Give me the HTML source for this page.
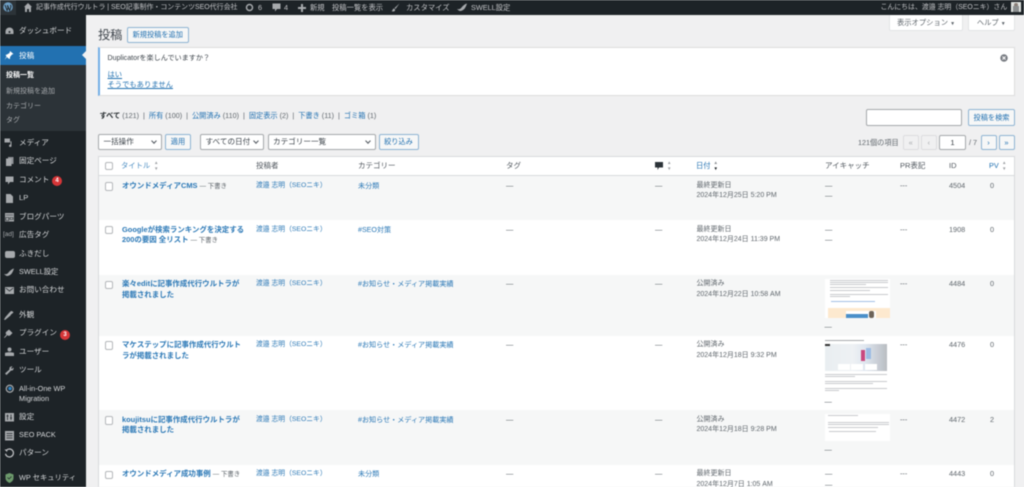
<!DOCTYPE html>
<html lang="ja"><head><meta charset="utf-8"><title>投稿</title>
<style>
html,body{margin:0;padding:0;width:1024px;height:487px;overflow:hidden;background:#f0f0f1}
body{position:relative;font-family:"Liberation Sans","Noto Sans CJK JP",sans-serif;font-size:7.3px;color:#5f666c;line-height:12px}
#w{position:absolute;left:0;top:0;width:1024px;height:487px;overflow:hidden;filter:blur(.4px)}
.a,.a *{box-sizing:border-box}
.a{position:absolute;white-space:nowrap}
#bar{left:0;top:0;width:1024px;height:15px;background:#1d2327}
#side{left:0;top:15px;width:85.5px;height:472px;background:#1d2327}
.b{color:#c3c4c7;font-size:7.3px;top:1.5px}
.m{color:#d5d7d9;font-size:7.6px;left:19px}
.s{color:#a7aaad;font-size:7px;left:6px}
svg{position:absolute;overflow:visible}
.btn{border:1px solid #8fb4d3;border-radius:2px;background:#f6f7f7;color:#2271b1;text-align:center;height:15px;line-height:13px;font-size:7.2px}
.sel{border:1px solid #a5a8ab;border-radius:2px;background:#fff;color:#3c434a;height:16px;line-height:14px;font-size:7.6px;padding-left:4.5px}
.sel:after{content:"";position:absolute;right:5px;top:4px;width:3px;height:3px;border:solid #50575e;border-width:0 1px 1px 0;transform:rotate(45deg)}
.l{color:#2271b1}
.ti{color:#2b78b6;font-weight:700;font-size:7.45px;left:122px}
.dr{color:#5f666c;font-weight:400;font-size:6.4px}
.c{left:104.5px;width:8.5px;height:8.5px;border:1px solid #b4b7ba;border-radius:2px;background:#fff}
.au{left:256px;color:#2b78b6;font-size:6.8px}
.ca{left:358px;color:#2b78b6;font-size:7.1px}
.da{left:696.5px;font-size:7px}
.h{font-size:7.5px;color:#50575e}
.pg{width:15.5px;height:15.5px;top:134.5px;border:1px solid #dcdcde;border-radius:2px;background:#f0f0f1;color:#a7aaad;text-align:center;line-height:13px;font-size:7.5px}
.pa{border-color:#8fb4d3;background:#f6f7f7;color:#2271b1}
.ln{background:#c8cacd;height:.8px}
</style></head><body><div id="w">

<div class="a" id="bar"></div>
<div class="a" style="left:0;top:0;width:15.5px;height:15px;background:#2c3338"></div>
<svg style="left:3px;top:2px" width="10" height="10" viewBox="0 0 20 20"><circle cx="10" cy="10" r="9.5" fill="#6f9fc4"/><path d="M4 6l4.2 11 2-6-1.6-4.4M9 6.4l4.2 10.8 2.4-7c.7-2.2-.6-3.800-1-4.300" fill="none" stroke="#1d2327" stroke-width="1.900"/></svg>
<svg style="left:24px;top:3px" width="8" height="9" viewBox="0 0 16 18"><path d="M8 0L0 8h2v10h4v-6h4v6h4V8h2z" fill="#a7aaad"/></svg>
<span class="a b" style="left:36px;font-size:6.95px">記事作成代行ウルトラ | SEO記事制作・コンテンツSEO代行会社</span>
<svg style="left:245px;top:3px" width="9" height="9" viewBox="0 0 18 18"><circle cx="9" cy="9" r="6" fill="none" stroke="#a7aaad" stroke-width="3"/></svg>
<span class="a b" style="left:258px">6</span>
<svg style="left:272px;top:3px" width="9" height="9" viewBox="0 0 18 18"><path d="M1 1h16v11H10l-4 5v-5H1z" fill="#a7aaad"/></svg>
<span class="a b" style="left:284px">4</span>
<svg style="left:298px;top:3.500px" width="8" height="8" viewBox="0 0 16 16"><path d="M6 0h4v6h6v4h-6v6H6v-6H0V6h6z" fill="#a7aaad"/></svg>
<span class="a b" style="left:310px">新規</span>
<span class="a b" style="left:332px">投稿一覧を表示</span>
<svg style="left:391px;top:3px" width="9" height="9" viewBox="0 0 18 18"><path d="M17 1L7 10l2 2zM6 11c-3 0-2 4-5 5 3 2 8 1 7-3z" fill="#a7aaad"/></svg>
<span class="a b" style="left:406px">カスタマイズ</span>
<svg style="left:457px;top:3px" width="11" height="9" viewBox="0 0 22 18"><path d="M20 1c-2 6-5 14-13 15C4 16 2 14 0 12c4 1 7 0 9-3 3-4 7-7 11-8z" fill="#a7aaad"/></svg>
<span class="a b" style="left:471px">SWELL設定</span>
<span class="a b" style="left:880.500px;font-size:6.900px">こんにちは、渡邉 志明（SEOニキ）さん</span>
<div class="a" style="left:1011px;top:2px;width:10px;height:10px;background:#dfe3e0"></div>
<div class="a" style="left:1014px;top:3px;width:4px;height:3.500px;background:#8a7f78;border-radius:2px"></div>
<div class="a" style="left:1013px;top:6px;width:6px;height:6px;background:#8b8f90"></div>

<div class="a" id="side"></div>
<div class="a" style="left:0;top:46px;width:85.500px;height:18.500px;background:#2271b1"></div>
<div class="a" style="left:81.500px;top:51px;width:0;height:0;border:4px solid transparent;border-right:4.500px solid #f0f0f1;border-left:0"></div>
<div class="a" style="left:0;top:64.500px;width:85.500px;height:66px;background:#2c3338"></div>

<svg style="left:5px;top:27px" width="9" height="8" viewBox="0 0 18 16"><path d="M9 1a8 8 0 0 0-8 8v5h16V9a8 8 0 0 0-8-8z" fill="#a7aaad"/><circle cx="9" cy="10" r="2" fill="#1d2327"/></svg>
<span class="a m" style="top:25px">ダッシュボード</span>
<svg style="left:4px;top:51px" width="10" height="9" viewBox="0 0 20 18"><path d="M12 0l7 6-3 1-4 5 0 4-3-1-3-3-5 6 4-7-2-3 3-1 5-3z" fill="#fff"/></svg>
<span class="a m" style="top:49.500px;color:#fff">投稿</span>
<span class="a s" style="top:70px;color:#fff;font-weight:700">投稿一覧</span>
<span class="a s" style="top:85.500px">新規投稿を追加</span>
<span class="a s" style="top:100.500px">カテゴリー</span>
<span class="a s" style="top:115px">タグ</span>

<svg style="left:4px;top:138px" width="10" height="10" viewBox="0 0 20 20"><path d="M1 1h11v8H1z" fill="#a7aaad"/><path d="M15 7v8a2.500 2.500 0 1 1-2-2V6z" fill="#a7aaad"/></svg>
<span class="a m" style="top:137px">メディア</span>
<svg style="left:5px;top:157px" width="9" height="9" viewBox="0 0 18 18"><path d="M6 0h11v14H6z" fill="#8e9196"/><path d="M2 3h11v15H2z" fill="#a7aaad"/></svg>
<span class="a m" style="top:155px">固定ページ</span>
<svg style="left:5px;top:176px" width="9" height="9" viewBox="0 0 18 18"><path d="M1 1h16v11h-7l-4 5v-5H1z" fill="#a7aaad"/></svg>
<span class="a m" style="top:174px">コメント</span>
<div class="a" style="left:52px;top:176px;width:10px;height:10px;border-radius:50%;background:#d63638;color:#fff;font-size:6px;line-height:10px;text-align:center;font-weight:700">4</div>
<svg style="left:6px;top:194px" width="7" height="9" viewBox="0 0 14 18"><path d="M0 0h9l5 5v13H0z" fill="#a7aaad"/></svg>
<span class="a m" style="top:192px">LP</span>
<svg style="left:5px;top:213px" width="9" height="8.500" viewBox="0 0 18 17"><path d="M0 0h18v17H0z" fill="#a7aaad"/><path d="M1.500 4h15M1.500 9h6v6h-6zM10 9h6v4h-6z" fill="none" stroke="#1d2327" stroke-width="1.200"/></svg>
<span class="a m" style="top:211px">ブログパーツ</span>
<span class="a" style="left:3px;top:229px;color:#a7aaad;font-size:6.500px">[ad]</span>
<span class="a m" style="top:229px">広告タグ</span>
<div class="a" style="left:5px;top:251px;width:9.500px;height:6.500px;background:#a7aaad;border-radius:2px"></div>
<span class="a m" style="top:248px">ふきだし</span>
<svg style="left:4px;top:268px" width="11" height="9" viewBox="0 0 22 18"><path d="M20 1c-2 6-5 14-13 15C4 16 2 14 0 12c4 1 7 0 9-3 3-4 7-7 11-8z" fill="#a7aaad"/></svg>
<span class="a m" style="top:266px;font-size:7.300px">SWELL設定</span>
<svg style="left:5px;top:287px" width="9" height="7" viewBox="0 0 18 14"><path d="M0 0h18v14H0z" fill="#a7aaad"/><path d="M1.500 2L9 8l7.500-6" fill="none" stroke="#1d2327" stroke-width="1.500"/></svg>
<span class="a m" style="top:284px">お問い合わせ</span>

<svg style="left:4px;top:311px" width="10" height="9" viewBox="0 0 20 18"><path d="M19 3c-1-2-3-3-5-3l-4 4-7 8-3 5 2 1 5-4 6-5 1-2z" fill="#a7aaad"/></svg>
<span class="a m" style="top:309px">外観</span>
<svg style="left:4px;top:329px" width="10" height="9" viewBox="0 0 20 18"><path d="M10 1l7 7-5 5c-2 1-4 1-5-1l-6 6-1-1 5-6c-2-1-2-3-1-5z" fill="#a7aaad"/></svg>
<span class="a m" style="top:327px">プラグイン</span>
<div class="a" style="left:60px;top:330px;width:10px;height:10px;border-radius:50%;background:#d63638;color:#fff;font-size:6px;line-height:10px;text-align:center;font-weight:700">3</div>
<svg style="left:5px;top:347px" width="9" height="9" viewBox="0 0 18 18"><circle cx="9" cy="5" r="4" fill="#a7aaad"/><path d="M0 12c3-2 15-2 18 0v6H0z" fill="#a7aaad"/></svg>
<span class="a m" style="top:346px">ユーザー</span>
<svg style="left:5px;top:366px" width="9" height="9" viewBox="0 0 18 18"><path d="M17 3l-3 3-2-2 3-3c-3-1-7 1-6 6L0 15l3 3 9-9c4 1 6-3 5-6z" fill="#a7aaad"/></svg>
<span class="a m" style="top:364px">ツール</span>
<svg style="left:5px;top:384px" width="9.500" height="9.500" viewBox="0 0 19 19"><circle cx="9.500" cy="9.500" r="7" fill="none" stroke="#a7aaad" stroke-width="2.500"/><circle cx="10" cy="9" r="3.500" fill="#2f86c7"/></svg>
<span class="a m" style="top:383px;font-size:7.300px">All-in-One WP</span>
<span class="a m" style="top:393px;font-size:7.300px">Migration</span>
<svg style="left:5px;top:413px" width="9" height="8.500" viewBox="0 0 18 17"><path d="M0 0h18v17H0z" fill="#a7aaad"/><path d="M5 3v11M12 3v11M3 6h4M10 10h4" stroke="#1d2327" stroke-width="1.500"/></svg>
<span class="a m" style="top:411px">設定</span>
<svg style="left:5px;top:430.500px" width="9" height="9.500" viewBox="0 0 18 19"><path d="M0 0h18v19H0z" fill="#a7aaad"/><path d="M3 5h12M3 9.500h12M3 14h12" stroke="#1d2327" stroke-width="1.400"/></svg>
<span class="a m" style="top:429px;font-size:7.300px">SEO PACK</span>
<svg style="left:4px;top:448px" width="10" height="10" viewBox="0 0 20 20"><path d="M5 4.500a8 8 0 1 1-2 7" fill="none" stroke="#c3c4c7" stroke-width="2.400"/><path d="M1 3l6 0-1 5z" fill="#c3c4c7"/></svg>
<span class="a m" style="top:447px">パターン</span>
<svg style="left:5px;top:473px" width="9" height="10" viewBox="0 0 18 20"><path d="M9 0l8 3v7c0 5-4 8-8 10-4-2-8-5-8-10V3z" fill="#6d9a6c"/><path d="M5 9l3 3 5-5" fill="none" stroke="#1d2327" stroke-width="1.500"/></svg>
<span class="a m" style="top:472px;font-size:7.300px">WP セキュリティ</span>

<div class="a" style="left:889px;top:15px;width:74px;height:16px;background:#fff;border:1px solid #e2e4e6;border-top:0;border-radius:0 0 2px 2px;text-align:center;line-height:16px;font-size:7.300px">表示オプション <span style="font-size:5px">▼</span></div>
<div class="a" style="left:968px;top:15px;width:46.500px;height:16px;background:#fff;border:1px solid #e2e4e6;border-top:0;border-radius:0 0 2px 2px;text-align:center;line-height:16px;font-size:7.300px">ヘルプ <span style="font-size:5px">▼</span></div>

<span class="a" style="left:98px;top:25.500px;font-size:12.200px;line-height:18px;color:#3c434a">投稿</span>
<div class="a btn" style="left:127px;top:26.500px;width:61.500px;height:16.500px;line-height:14.500px">新規投稿を追加</div>

<div class="a" style="left:98px;top:47px;width:917px;height:48.500px;background:#fff;border:1px solid #dcdcde;border-left:2.500px solid #72aee6"></div>
<span class="a" style="left:107.500px;top:52px;font-size:7.100px;color:#3c434a">Duplicatorを楽しんでいますか？</span>
<span class="a l" style="left:107.500px;top:69px;font-size:7.300px;text-decoration:underline">はい</span>
<span class="a l" style="left:107.500px;top:79px;font-size:7.300px;text-decoration:underline">そうでもありません</span>
<svg style="left:999.500px;top:53.500px" width="8" height="8" viewBox="0 0 16 16"><circle cx="8" cy="8" r="7.500" fill="#787c82"/><path d="M5 5l6 6M11 5l-6 6" stroke="#fff" stroke-width="2"/></svg>

<span class="a" style="left:99.500px;top:109.500px;font-size:7.200px"><b style="color:#1d2327">すべて</b> (121) &nbsp;|&nbsp; <span class="l">所有</span> (100) &nbsp;|&nbsp; <span class="l">公開済み</span> (110) &nbsp;|&nbsp; <span class="l">固定表示</span> (2) &nbsp;|&nbsp; <span class="l">下書き</span> (11) &nbsp;|&nbsp; <span class="l">ゴミ箱</span> (1)</span>
<div class="a" style="left:866px;top:109px;width:95.500px;height:17px;background:#fff;border:1px solid #a5a8ab;border-radius:2px"></div>
<div class="a btn" style="left:968px;top:109px;width:47px;height:17px;line-height:15px">投稿を検索</div>

<div class="a sel" style="left:98px;top:134px;width:64px">一括操作</div>
<div class="a btn" style="left:165px;top:134px;width:26px;height:16px;line-height:14px">適用</div>
<div class="a sel" style="left:200px;top:134px;width:64px">すべての日付</div>
<div class="a sel" style="left:267.500px;top:134px;width:108px">カテゴリー一覧</div>
<div class="a btn" style="left:378.500px;top:134px;width:40px;height:16px;line-height:14px">絞り込み</div>
<span class="a" style="left:858px;top:137px;font-size:7.200px">121個の項目</span>
<div class="a pg" style="left:903px">«</div>
<div class="a pg" style="left:921px">‹</div>
<div class="a" style="left:939px;top:134.500px;width:27px;height:15.500px;background:#fff;border:1px solid #a5a8ab;border-radius:2px;text-align:center;line-height:13.500px;color:#2c3338">1</div>
<span class="a" style="left:969px;top:137px">/ 7</span>
<div class="a pg pa" style="left:980.500px;width:16px">›</div>
<div class="a pg pa" style="left:998.500px;width:16px">»</div>

<div class="a" style="left:98px;top:155.500px;width:917px;height:332px;background:#fff;border:1px solid #d8dadc"></div>
<div class="a" style="left:99px;top:175px;width:915px;height:.8px;background:#d8dadc"></div>
<div class="a" style="left:99px;top:176px;width:915px;height:43.500px;background:#f6f7f7"></div>
<div class="a" style="left:99px;top:275px;width:915px;height:60.500px;background:#f6f7f7"></div>
<div class="a" style="left:99px;top:410px;width:915px;height:54.500px;background:#f6f7f7"></div>

<div class="a c" style="top:161.500px"></div>
<span class="a l" style="left:121px;top:159.500px;color:#4b8dc2">タイトル</span><span class="a" style="left:154px;top:160px;font-size:4.500px;line-height:6px;color:#a0a3a7">▲<br>▼</span>
<span class="a h" style="left:256px;top:159.500px">投稿者</span>
<span class="a h" style="left:358px;top:159.500px">カテゴリー</span>
<span class="a h" style="left:506px;top:159.500px">タグ</span>
<svg style="left:654.500px;top:161.500px" width="8" height="8" viewBox="0 0 16 16"><path d="M0 0h16v11H8l-3 5v-5H0z" fill="#2c3338"/></svg>
<span class="a" style="left:667px;top:160px;font-size:4.500px;line-height:6px;color:#a0a3a7">▲<br>▼</span>
<span class="a l" style="left:696px;top:159.500px">日付</span><span class="a" style="left:713.500px;top:160px;font-size:4.500px;line-height:6px;color:#8c8f94">▲<br><span style="color:#1d2327">▼</span></span>
<span class="a h" style="left:825px;top:159.500px">アイキャッチ</span>
<span class="a h" style="left:900px;top:159.500px">PR表記</span>
<span class="a h" style="left:949px;top:159.500px">ID</span>
<span class="a l" style="left:989px;top:159.500px">PV</span><span class="a" style="left:1002px;top:160px;font-size:4.500px;line-height:6px;color:#a0a3a7">▲<br>▼</span>

<!-- row 1 -->
<div class="a c" style="top:182px"></div>
<span class="a ti" style="top:179.500px">オウンドメディアCMS <span class="dr">— 下書き</span></span>
<span class="a au" style="top:179.500px">渡邉 志明（SEOニキ）</span>
<span class="a ca" style="top:179.500px">未分類</span>
<span class="a" style="left:506px;top:179.500px">—</span><span class="a" style="left:655px;top:179.500px">—</span>
<span class="a da" style="top:179.500px">最終更新日</span><span class="a da" style="top:190px">2024年12月25日 5:20 PM</span>
<span class="a" style="left:825px;top:179.500px">—</span><span class="a" style="left:825px;top:190px">—</span>
<span class="a" style="left:900px;top:179.500px">---</span><span class="a" style="left:949px;top:179.500px">4504</span><span class="a" style="left:990px;top:179.500px">0</span>
<!-- row 2 -->
<div class="a c" style="top:225.500px"></div>
<span class="a ti" style="top:223.500px">Googleが検索ランキングを決定する</span>
<span class="a ti" style="top:234px">200の要因 全リスト <span class="dr">— 下書き</span></span>
<span class="a au" style="top:223.500px">渡邉 志明（SEOニキ）</span>
<span class="a ca" style="top:223.500px">#SEO対策</span>
<span class="a" style="left:506px;top:223.500px">—</span><span class="a" style="left:655px;top:223.500px">—</span>
<span class="a da" style="top:223.500px">最終更新日</span><span class="a da" style="top:234px">2024年12月24日 11:39 PM</span>
<span class="a" style="left:825px;top:223.500px">—</span><span class="a" style="left:825px;top:234px">—</span>
<span class="a" style="left:900px;top:223.500px">---</span><span class="a" style="left:949px;top:223.500px">1908</span><span class="a" style="left:990px;top:223.500px">0</span>
<!-- row 3 -->
<div class="a c" style="top:280.500px"></div>
<span class="a ti" style="top:278px">楽々editに記事作成代行ウルトラが</span>
<span class="a ti" style="top:289px">掲載されました</span>
<span class="a au" style="top:278px">渡邉 志明（SEOニキ）</span>
<span class="a ca" style="top:278px">#お知らせ・メディア掲載実績</span>
<span class="a" style="left:506px;top:278px">—</span><span class="a" style="left:655px;top:278px">—</span>
<span class="a da" style="top:278px">公開済み</span><span class="a da" style="top:289px">2024年12月22日 10:58 AM</span>
<div class="a" style="left:824.500px;top:279px;width:65px;height:39px;background:#fff"></div>
<div class="a ln" style="left:830px;top:280px;width:58px"></div><div class="a ln" style="left:830px;top:282px;width:58px"></div><div class="a ln" style="left:830px;top:283.500px;width:36px"></div>
<div class="a ln" style="left:830px;top:287px;width:58px"></div><div class="a ln" style="left:830px;top:289.500px;width:40px"></div>
<div class="a ln" style="left:830px;top:294px;width:58px"></div><div class="a ln" style="left:830px;top:296px;width:20px"></div>
<div class="a ln" style="left:831px;top:301px;width:44px;background:#a3c0e6"></div>
<div class="a" style="left:828px;top:308px;width:61.500px;height:10px;background:#fde9cf"></div>
<div class="a" style="left:846px;top:311px;width:30px;height:7px;background:#fff"></div>
<div class="a" style="left:846px;top:314px;width:22px;height:4px;background:#4a8fc9"></div>
<div class="a" style="left:869px;top:311px;width:5px;height:7px;background:#6d6358;border-radius:2px"></div>
<span class="a" style="left:824.500px;top:320.500px">—</span>
<span class="a" style="left:900px;top:278px">---</span><span class="a" style="left:949px;top:278px">4484</span><span class="a" style="left:990px;top:278px">0</span>
<!-- row 4 -->
<div class="a c" style="top:341px"></div>
<span class="a ti" style="top:339px">マケステップに記事作成代行ウルト</span>
<span class="a ti" style="top:349.500px">ラが掲載されました</span>
<span class="a au" style="top:339px">渡邉 志明（SEOニキ）</span>
<span class="a ca" style="top:339px">#お知らせ・メディア掲載実績</span>
<span class="a" style="left:506px;top:339px">—</span><span class="a" style="left:655px;top:339px">—</span>
<span class="a da" style="top:339px">公開済み</span><span class="a da" style="top:349.500px">2024年12月18日 9:32 PM</span>
<div class="a" style="left:825px;top:340px;width:39px;height:1px;background:#a8aaad"></div>
<div class="a" style="left:825px;top:344px;width:61.500px;height:26.500px;background:linear-gradient(90deg,#e9eef1 0%,#eef1f4 45%,#dfe6ef 65%,#b9bdc2 100%)"></div>
<div class="a" style="left:825px;top:344px;width:5px;height:2px;background:#333"></div>
<div class="a" style="left:861px;top:350px;width:4px;height:11px;background:#c9487f"></div>
<div class="a" style="left:866px;top:348px;width:5px;height:11px;background:#9dbbe3"></div>
<div class="a" style="left:838px;top:364px;width:12px;height:6px;background:#fff"></div><div class="a" style="left:851px;top:364px;width:12px;height:6px;background:#fff"></div><div class="a" style="left:865px;top:364px;width:12px;height:6px;background:#fff"></div>
<div class="a ln" style="left:825px;top:374px;width:62px"></div><div class="a ln" style="left:825px;top:376px;width:30px"></div>
<div class="a ln" style="left:825px;top:380.500px;width:62px"></div><div class="a ln" style="left:825px;top:383px;width:48px"></div>
<div class="a ln" style="left:825px;top:387.500px;width:62px"></div><div class="a ln" style="left:825px;top:390px;width:14px"></div>
<span class="a" style="left:824.500px;top:395.500px">—</span>
<span class="a" style="left:900px;top:339px">---</span><span class="a" style="left:949px;top:339px">4476</span><span class="a" style="left:990px;top:339px">0</span>
<!-- row 5 -->
<div class="a c" style="top:416px"></div>
<span class="a ti" style="top:413.500px">koujitsuに記事作成代行ウルトラが</span>
<span class="a ti" style="top:424px">掲載されました</span>
<span class="a au" style="top:413.500px">渡邉 志明（SEOニキ）</span>
<span class="a ca" style="top:413.500px">#お知らせ・メディア掲載実績</span>
<span class="a" style="left:506px;top:413.500px">—</span><span class="a" style="left:655px;top:413.500px">—</span>
<span class="a da" style="top:413.500px">公開済み</span><span class="a da" style="top:424px">2024年12月18日 9:28 PM</span>
<div class="a" style="left:824.500px;top:414px;width:65px;height:27px;background:#fff"></div>
<div class="a ln" style="left:828px;top:415px;width:30px"></div>
<div class="a ln" style="left:828px;top:421.500px;width:61px"></div><div class="a ln" style="left:828px;top:424px;width:61px"></div><div class="a ln" style="left:828px;top:426.500px;width:50px"></div>
<div class="a ln" style="left:829px;top:431px;width:47px"></div>
<span class="a" style="left:824.500px;top:444px">—</span>
<span class="a" style="left:900px;top:413.500px">---</span><span class="a" style="left:949px;top:413.500px">4472</span><span class="a" style="left:990px;top:413.500px">2</span>
<!-- row 6 -->
<div class="a c" style="top:470.500px"></div>
<span class="a ti" style="top:468px">オウンドメディア成功事例 <span class="dr">— 下書き</span></span>
<span class="a au" style="top:468px">渡邉 志明（SEOニキ）</span>
<span class="a ca" style="top:468px">未分類</span>
<span class="a" style="left:506px;top:468px">—</span><span class="a" style="left:655px;top:468px">—</span>
<span class="a da" style="top:468px">最終更新日</span><span class="a da" style="top:478.500px">2024年12月7日 1:05 AM</span>
<span class="a" style="left:825px;top:468px">—</span><span class="a" style="left:825px;top:478.500px">—</span>
<span class="a" style="left:900px;top:468px">---</span><span class="a" style="left:949px;top:468px">4443</span><span class="a" style="left:990px;top:468px">0</span>
</div></body></html>
